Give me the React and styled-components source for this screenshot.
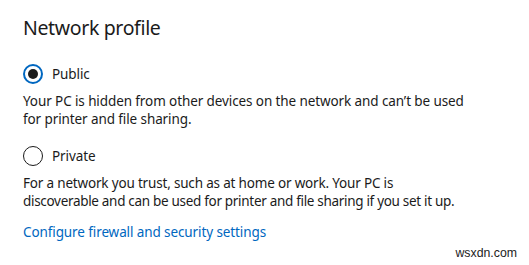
import React from "react";
import styled, { createGlobalStyle } from "styled-components";

const Global = createGlobalStyle`
  html, body { margin: 0; padding: 0; background: #ffffff; }
  body { font-family: "Noto Sans", "Open Sans", sans-serif; color: #1b1b1b; }
`;

const Page = styled.div`
  position: relative;
  width: 529px;
  height: 265px;
  box-sizing: border-box;
  padding: 14px 23px 0 23px;
  display: flex;
  flex-direction: column;
`;

const Title = styled.h2`
  margin: 0;
  font-size: 19.5px;
  letter-spacing: -0.35px;
  font-weight: 400;
  line-height: 28px;
  color: #1b1b1b;
`;

const Option = styled.div`
  display: flex;
  flex-direction: column;
  margin-top: ${(p) => p.$top}px;
`;

const Row = styled.label`
  display: flex;
  align-items: center;
  gap: 9px;
  font-size: 13.5px;
  letter-spacing: -0.1px;
  line-height: 20px;
`;

const Radio = styled.span`
  box-sizing: border-box;
  width: 20px;
  height: 20px;
  border-radius: 50%;
  border: ${(p) => (p.$checked ? "2px solid #0067c0" : "1.5px solid #1b1b1b")};
  display: flex;
  align-items: center;
  justify-content: center;
  &::after {
    content: "";
    display: ${(p) => (p.$checked ? "block" : "none")};
    width: 10px;
    height: 10px;
    border-radius: 50%;
    background: #1b1b1b;
  }
`;

const Desc = styled.p`
  margin: 8px 0 0 0;
  font-size: 13.5px;
  line-height: 18px;
  color: #1b1b1b;
  display: flex;
  flex-direction: column;
`;

const Line = styled.span`
  letter-spacing: ${(p) => p.$tracking}px;
  white-space: nowrap;
`;

const Link = styled.a`
  margin-top: 12px;
  font-size: 13.5px;
  letter-spacing: -0.1px;
  line-height: 20px;
  color: #0067c0;
  text-decoration: none;
`;

const Watermark = styled.span`
  position: absolute;
  right: 12px;
  bottom: 5px;
  font-family: "Liberation Sans", Arial, sans-serif;
  font-size: 12.3px;
  color: #222;
`;

export default function App() {
  return (
    <>
      <Global />
      <Page>
        <Title>Network profile</Title>
        <Option $top={22}>
          <Row>
            <Radio $checked />
            Public
          </Row>
          <Desc>
            <Line $tracking={-0.1}>
              Your PC is hidden from other devices on the network and can’t be used
            </Line>
            <Line $tracking={-0.1}>for printer and file sharing.</Line>
          </Desc>
        </Option>
        <Option $top={18}>
          <Row>
            <Radio />
            Private
          </Row>
          <Desc>
            <Line $tracking={-0.18}>
              For a network you trust, such as at home or work. Your PC is
            </Line>
            <Line $tracking={-0.31}>
              discoverable and can be used for printer and file sharing if you set it up.
            </Line>
          </Desc>
        </Option>
        <Link href="#">Configure firewall and security settings</Link>
        <Watermark>wsxdn.com</Watermark>
      </Page>
    </>
  );
}
